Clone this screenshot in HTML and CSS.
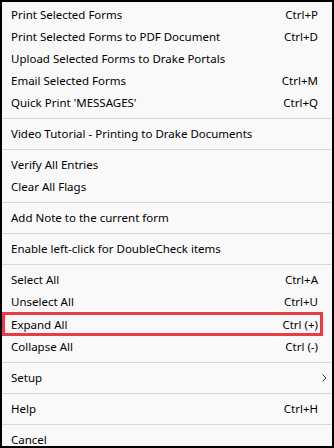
FILE: index.html
```html
<!DOCTYPE html>
<html lang="en">
<head>
    <meta charset="UTF-8">
    <meta name="viewport" content="width=device-width, initial-scale=1.0">
    <title>Forms Menu</title>
    <link rel="stylesheet" href="styles.css">
</head>
<body>

<div class="menu">
    <div class="menu-item"><span class="label">Print Selected Forms</span><span class="shortcut">Ctrl+P</span></div>
    <div class="menu-item"><span class="label">Print Selected Forms to PDF Document</span><span class="shortcut">Ctrl+D</span></div>
    <div class="menu-item"><span class="label">Upload Selected Forms to Drake Portals</span></div>
    <div class="menu-item"><span class="label">Email Selected Forms</span><span class="shortcut">Ctrl+M</span></div>
    <div class="menu-item"><span class="label">Quick Print 'MESSAGES'</span><span class="shortcut">Ctrl+Q</span></div>
    <div class="separator"></div>
    <div class="menu-item"><span class="label">Video Tutorial - Printing to Drake Documents</span></div>
    <div class="separator"></div>
    <div class="menu-item"><span class="label">Verify All Entries</span></div>
    <div class="menu-item"><span class="label">Clear All Flags</span></div>
    <div class="separator"></div>
    <div class="menu-item"><span class="label">Add Note to the current form</span></div>
    <div class="separator"></div>
    <div class="menu-item"><span class="label">Enable left-click for DoubleCheck items</span></div>
    <div class="separator"></div>
    <div class="menu-item"><span class="label">Select All</span><span class="shortcut">Ctrl+A</span></div>
    <div class="menu-item"><span class="label">Unselect All</span><span class="shortcut">Ctrl+U</span></div>
    <div class="menu-item highlighted"><span class="label">Expand All</span><span class="shortcut">Ctrl (+)</span></div>
    <div class="menu-item"><span class="label">Collapse All</span><span class="shortcut">Ctrl (-)</span></div>
    <div class="separator"></div>
    <div class="menu-item"><span class="label">Setup</span>
        <svg class="submenu-arrow" width="5" height="8" viewBox="0 0 5 8"><path d="M0.5 0.5 L4 4 L0.5 7.5" fill="none" stroke="#333" stroke-width="1"/></svg>
    </div>
    <div class="separator"></div>
    <div class="menu-item"><span class="label">Help</span><span class="shortcut">Ctrl+H</span></div>
    <div class="separator"></div>
    <div class="menu-item"><span class="label">Cancel</span></div>
</div>

</body>
</html>
```

FILE: styles.css
```css
body {
    margin: 0;
    font-family: "Noto Sans", sans-serif;
    font-size: 11.5px;
    color: #000;
    background: #000;
}
.menu {
    position: relative;
    width: 334px;
    height: 448px;
    box-sizing: border-box;
    border: 2px solid #000;
    background-color: #f9f9f9;
    padding-top: 2px;
    overflow: hidden;
}
.menu-item {
    display: flex;
    align-items: center;
    height: 21px;
    padding: 0 14px 1px 9px;
    white-space: nowrap;
}
.label {
    flex: 1;
}
.shortcut {
    text-align: right;
}
.submenu-arrow {
    margin-right: -9px;
}
.separator {
    height: 1px;
    margin: 4px 0;
    background-color: #d7d7d7;
}
.highlighted {
    outline: 3px solid #ea3d43;
    outline-offset: -3px;
    margin-right: 9px;
    height: 22px;
    margin-top: -1px;
    padding-top: 1px;
    padding-right: 5px;
}
```
